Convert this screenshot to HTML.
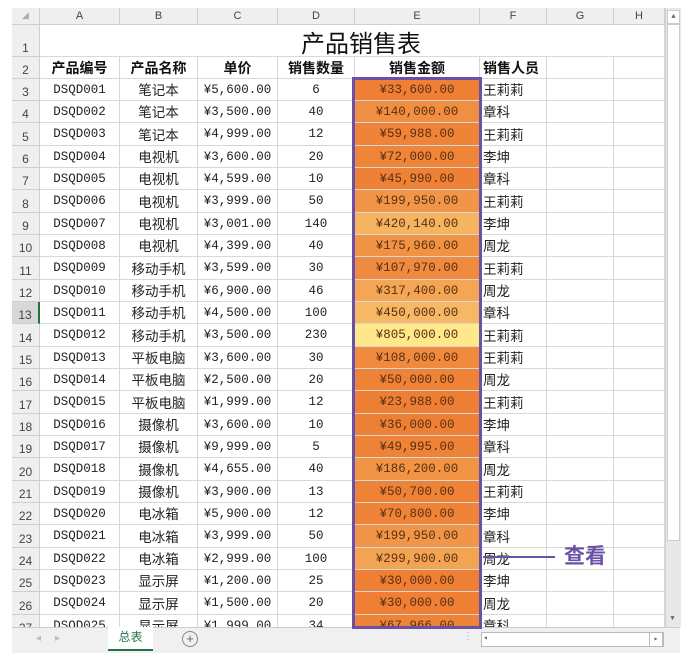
<!DOCTYPE html>
<html><head><meta charset="utf-8"><style>
body{margin:0;width:688px;height:669px;background:#fff;position:relative;overflow:hidden;font-family:"Liberation Mono","Noto Sans CJK SC",monospace;}
#g{position:absolute;left:12px;top:8px;width:653px;}
.r{display:flex;overflow:hidden;}
.r>div{box-sizing:border-box;border-right:1px solid #d8d8d8;border-bottom:1px solid #d8d8d8;flex:none;overflow:hidden;white-space:nowrap;text-align:center;font-size:12.5px;color:#222;display:flex;align-items:center;justify-content:center;}
.r>div:nth-child(1){width:28px;background:#efefef;color:#444;font-size:12px;font-family:"Liberation Sans",sans-serif;align-items:flex-end;padding-bottom:1px;border-color:#cfcfcf}
.r>div:nth-child(2){width:80px}.r>div:nth-child(3){width:78px;font-size:13.5px}.r>div:nth-child(4){width:80px}.r>div:nth-child(5){width:77px}
.r>div:nth-child(6){width:125px;color:#5a3010}.r>div:nth-child(7){width:67px;justify-content:flex-start;padding-left:3px;font-size:13.5px}.r>div:nth-child(8){width:67px}.r>div:nth-child(9){width:51px}
.ch>div{background:#efefef!important;color:#444!important;font-size:11px!important;font-family:"Liberation Sans",sans-serif!important;border-color:#cfcfcf!important;align-items:center!important}
.h2>div{font-weight:bold;font-size:14px!important;font-family:"Liberation Sans","Noto Sans CJK SC",sans-serif;color:#111!important}
.h2>div:nth-child(1){font-weight:normal;font-size:12px!important;color:#444!important}
.a{height:22px}.b{height:23px}
</style></head><body>
<div id="g">
<div class="r ch" style="height:17px"><div style="font-size:9px!important;color:#aaa!important">◢</div><div>A</div><div>B</div><div>C</div><div>D</div><div>E</div><div style="justify-content:center;padding-left:0">F</div><div>G</div><div>H</div></div>
<div class="r" style="height:32px"><div>1</div><div style="width:625px;position:relative;overflow:visible"><span style="position:relative;left:9px;top:1px;font-size:24px;font-family:'Noto Sans CJK SC',sans-serif;color:#111">产品销售表</span></div></div>
<div class="r h2 a"><div>2</div><div>产品编号</div><div>产品名称</div><div>单价</div><div>销售数量</div><div>销售金额</div><div>销售人员</div><div></div><div></div></div>
<div class="r a"><div>3</div><div>DSQD001</div><div>笔记本</div><div>¥5,600.00</div><div>6</div><div style="background:rgb(238,127,53)">¥33,600.00</div><div>王莉莉</div><div></div><div></div></div>
<div class="r a"><div>4</div><div>DSQD002</div><div>笔记本</div><div>¥3,500.00</div><div>40</div><div style="background:rgb(240,142,65)">¥140,000.00</div><div>章科</div><div></div><div></div></div>
<div class="r b"><div>5</div><div>DSQD003</div><div>笔记本</div><div>¥4,999.00</div><div>12</div><div style="background:rgb(239,131,56)">¥59,988.00</div><div>王莉莉</div><div></div><div></div></div>
<div class="r a"><div>6</div><div>DSQD004</div><div>电视机</div><div>¥3,600.00</div><div>20</div><div style="background:rgb(239,133,57)">¥72,000.00</div><div>李坤</div><div></div><div></div></div>
<div class="r a"><div>7</div><div>DSQD005</div><div>电视机</div><div>¥4,599.00</div><div>10</div><div style="background:rgb(238,129,54)">¥45,990.00</div><div>章科</div><div></div><div></div></div>
<div class="r b"><div>8</div><div>DSQD006</div><div>电视机</div><div>¥3,999.00</div><div>50</div><div style="background:rgb(241,150,72)">¥199,950.00</div><div>王莉莉</div><div></div><div></div></div>
<div class="r a"><div>9</div><div>DSQD007</div><div>电视机</div><div>¥3,001.00</div><div>140</div><div style="background:rgb(246,180,97)">¥420,140.00</div><div>李坤</div><div></div><div></div></div>
<div class="r a"><div>10</div><div>DSQD008</div><div>电视机</div><div>¥4,399.00</div><div>40</div><div style="background:rgb(241,147,69)">¥175,960.00</div><div>周龙</div><div></div><div></div></div>
<div class="r b"><div>11</div><div>DSQD009</div><div>移动手机</div><div>¥3,599.00</div><div>30</div><div style="background:rgb(240,138,62)">¥107,970.00</div><div>王莉莉</div><div></div><div></div></div>
<div class="r a"><div>12</div><div>DSQD010</div><div>移动手机</div><div>¥6,900.00</div><div>46</div><div style="background:rgb(244,166,85)">¥317,400.00</div><div>周龙</div><div></div><div></div></div>
<div class="r a"><div style="background:#d8d8d8;border-right:2px solid #217346">13</div><div>DSQD011</div><div>移动手机</div><div>¥4,500.00</div><div>100</div><div style="background:rgb(246,184,100)">¥450,000.00</div><div>章科</div><div></div><div></div></div>
<div class="r b"><div>14</div><div>DSQD012</div><div>移动手机</div><div>¥3,500.00</div><div>230</div><div style="background:rgb(253,233,140)">¥805,000.00</div><div>王莉莉</div><div></div><div></div></div>
<div class="r a"><div>15</div><div>DSQD013</div><div>平板电脑</div><div>¥3,600.00</div><div>30</div><div style="background:rgb(240,138,62)">¥108,000.00</div><div>王莉莉</div><div></div><div></div></div>
<div class="r a"><div>16</div><div>DSQD014</div><div>平板电脑</div><div>¥2,500.00</div><div>20</div><div style="background:rgb(238,130,55)">¥50,000.00</div><div>周龙</div><div></div><div></div></div>
<div class="r b"><div>17</div><div>DSQD015</div><div>平板电脑</div><div>¥1,999.00</div><div>12</div><div style="background:rgb(238,126,52)">¥23,988.00</div><div>王莉莉</div><div></div><div></div></div>
<div class="r a"><div>18</div><div>DSQD016</div><div>摄像机</div><div>¥3,600.00</div><div>10</div><div style="background:rgb(238,128,53)">¥36,000.00</div><div>李坤</div><div></div><div></div></div>
<div class="r a"><div>19</div><div>DSQD017</div><div>摄像机</div><div>¥9,999.00</div><div>5</div><div style="background:rgb(238,130,55)">¥49,995.00</div><div>章科</div><div></div><div></div></div>
<div class="r b"><div>20</div><div>DSQD018</div><div>摄像机</div><div>¥4,655.00</div><div>40</div><div style="background:rgb(241,148,70)">¥186,200.00</div><div>周龙</div><div></div><div></div></div>
<div class="r a"><div>21</div><div>DSQD019</div><div>摄像机</div><div>¥3,900.00</div><div>13</div><div style="background:rgb(238,130,55)">¥50,700.00</div><div>王莉莉</div><div></div><div></div></div>
<div class="r a"><div>22</div><div>DSQD020</div><div>电冰箱</div><div>¥5,900.00</div><div>12</div><div style="background:rgb(239,132,57)">¥70,800.00</div><div>李坤</div><div></div><div></div></div>
<div class="r b"><div>23</div><div>DSQD021</div><div>电冰箱</div><div>¥3,999.00</div><div>50</div><div style="background:rgb(241,150,72)">¥199,950.00</div><div>章科</div><div></div><div></div></div>
<div class="r a"><div>24</div><div>DSQD022</div><div>电冰箱</div><div>¥2,999.00</div><div>100</div><div style="background:rgb(243,164,83)">¥299,900.00</div><div>周龙</div><div></div><div></div></div>
<div class="r a"><div>25</div><div>DSQD023</div><div>显示屏</div><div>¥1,200.00</div><div>25</div><div style="background:rgb(238,127,53)">¥30,000.00</div><div>李坤</div><div></div><div></div></div>
<div class="r b"><div>26</div><div>DSQD024</div><div>显示屏</div><div>¥1,500.00</div><div>20</div><div style="background:rgb(238,127,53)">¥30,000.00</div><div>周龙</div><div></div><div></div></div>
<div class="r a"><div>27</div><div>DSQD025</div><div>显示屏</div><div>¥1,999.00</div><div>34</div><div style="background:rgb(239,132,57)">¥67,966.00</div><div>章科</div><div></div><div></div></div>
</div>
<!-- scrollbar -->
<div style="position:absolute;left:665px;top:8px;width:15px;height:619px;background:#e8e8e8;border-left:1px solid #d0d0d0"></div>
<div style="position:absolute;left:667px;top:10px;width:11px;height:12px;background:#fff;border:1px solid #ccc;font-size:7px;text-align:center;color:#666;line-height:12px">▲</div>
<div style="position:absolute;left:667px;top:24px;width:11px;height:515px;background:#fff;border:1px solid #ccc"></div>
<div style="position:absolute;left:667px;top:613px;width:11px;height:12px;font-size:7px;text-align:center;color:#666;line-height:12px">▼</div>
<!-- bottom bar -->
<div style="position:absolute;left:12px;top:627px;width:668px;height:25px;background:#f0f0f0;border-top:1px solid #ccc"></div>
<div style="position:absolute;left:0;top:653px;width:688px;height:16px;background:#fff"></div>
<div style="position:absolute;left:36px;top:633px;font-size:10px;color:#bbb;font-family:'Liberation Sans',sans-serif">◂&nbsp;&nbsp;&nbsp;&nbsp;&nbsp;▸</div>
<div style="position:absolute;left:108px;top:627px;width:45px;height:22px;background:#fff;border-bottom:2px solid #217346;color:#217346;font-size:12px;text-align:center;line-height:20px;font-family:'Noto Sans CJK SC',sans-serif">总表</div>
<div style="position:absolute;left:182px;top:631px;width:14px;height:14px;border:1px solid #888;border-radius:50%;color:#666;font-size:13px;line-height:14px;text-align:center;font-family:'Liberation Sans',sans-serif">+</div>
<div style="position:absolute;left:463px;top:631px;font-size:10px;color:#aaa">⋮</div>
<div style="position:absolute;left:481px;top:632px;width:181px;height:13px;background:#fff;border:1px solid #bbb"></div>
<div style="position:absolute;left:483px;top:633px;font-size:8px;color:#666">◂</div>
<div style="position:absolute;left:649px;top:632px;width:12px;height:13px;border:1px solid #bbb;background:#fff;font-size:8px;color:#666;text-align:center;line-height:13px">▸</div>
<!-- purple box -->
<div style="position:absolute;left:352px;top:77px;width:124px;height:546px;border:3px solid #6a51a6"></div>
<div style="position:absolute;left:483px;top:556px;width:72px;height:2px;background:#6a51a6"></div>
<div style="position:absolute;left:564px;top:542px;font-size:21px;font-weight:bold;color:#6a51a6;font-family:'Noto Sans CJK SC',sans-serif;line-height:26px">查看</div>
</body></html>
